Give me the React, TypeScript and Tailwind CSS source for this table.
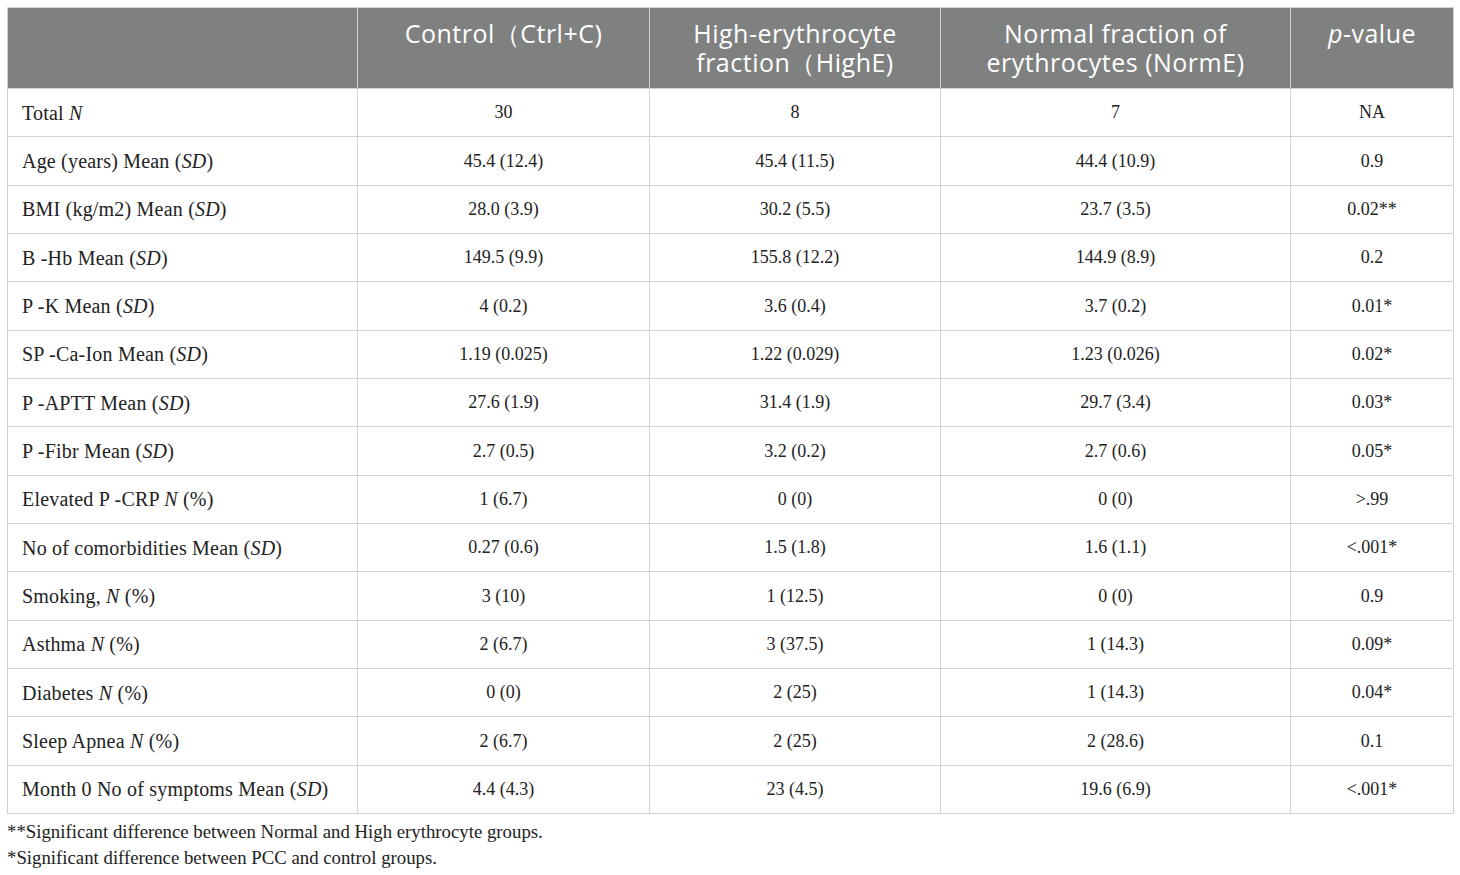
const rows: [React.ReactNode, string, string, string, string][] = [
  [<>Total <i>N</i></>, "30", "8", "7", "NA"],
  [<>Age (years) Mean (<i>SD</i>)</>, "45.4 (12.4)", "45.4 (11.5)", "44.4 (10.9)", "0.9"],
  [<>BMI (kg/m2) Mean (<i>SD</i>)</>, "28.0 (3.9)", "30.2 (5.5)", "23.7 (3.5)", "0.02**"],
  [<>B -Hb Mean (<i>SD</i>)</>, "149.5 (9.9)", "155.8 (12.2)", "144.9 (8.9)", "0.2"],
  [<>P -K Mean (<i>SD</i>)</>, "4 (0.2)", "3.6 (0.4)", "3.7 (0.2)", "0.01*"],
  [<>SP -Ca-Ion Mean (<i>SD</i>)</>, "1.19 (0.025)", "1.22 (0.029)", "1.23 (0.026)", "0.02*"],
  [<>P -APTT Mean (<i>SD</i>)</>, "27.6 (1.9)", "31.4 (1.9)", "29.7 (3.4)", "0.03*"],
  [<>P -Fibr Mean (<i>SD</i>)</>, "2.7 (0.5)", "3.2 (0.2)", "2.7 (0.6)", "0.05*"],
  [<>Elevated P -CRP <i>N</i> (%)</>, "1 (6.7)", "0 (0)", "0 (0)", ">.99"],
  [<>No of comorbidities Mean (<i>SD</i>)</>, "0.27 (0.6)", "1.5 (1.8)", "1.6 (1.1)", "<.001*"],
  [<>Smoking, <i>N</i> (%)</>, "3 (10)", "1 (12.5)", "0 (0)", "0.9"],
  [<>Asthma <i>N</i> (%)</>, "2 (6.7)", "3 (37.5)", "1 (14.3)", "0.09*"],
  [<>Diabetes <i>N</i> (%)</>, "0 (0)", "2 (25)", "1 (14.3)", "0.04*"],
  [<>Sleep Apnea <i>N</i> (%)</>, "2 (6.7)", "2 (25)", "2 (28.6)", "0.1"],
  [<>Month 0 No of symptoms Mean (<i>SD</i>)</>, "4.4 (4.3)", "23 (4.5)", "19.6 (6.9)", "<.001*"],
];

const head = "border border-[#d2d2d2] px-2 text-center font-normal align-middle";
const cell = "border border-[#d2d2d2] text-center align-middle text-[18px]";

export default function App() {
  return (
    <div className="min-h-screen bg-white pt-[7px] pl-[7px] text-[#222]">
      <table className="w-[1446px] table-fixed border-collapse">
        <colgroup>
          <col className="w-[350px]" />
          <col className="w-[292px]" />
          <col className="w-[291px]" />
          <col className="w-[350px]" />
          <col className="w-[163px]" />
        </colgroup>
        <thead>
          <tr className="h-[81px] bg-[#7f8180] text-white text-[25px] leading-[29px] tracking-[0.5px] font-['Open_Sans',sans-serif]">
            <th className={head}></th>
            <th className={`${head} pb-[29px]`}>Control（Ctrl+C)</th>
            <th className={head}>High-erythrocyte fraction（HighE)</th>
            <th className={head}>Normal fraction of erythrocytes (NormE)</th>
            <th className={`${head} pb-[29px]`}><i>p</i>-value</th>
          </tr>
        </thead>
        <tbody className="font-['Liberation_Serif',serif]">
          {rows.map((r, i) => (
            <tr key={i} className="h-[48.35px]">
              <td className="border border-[#d2d2d2] pl-[14px] align-middle text-[20px] tracking-[0.2px]">{r[0]}</td>
              <td className={cell}>{r[1]}</td>
              <td className={cell}>{r[2]}</td>
              <td className={cell}>{r[3]}</td>
              <td className={cell}>{r[4]}</td>
            </tr>
          ))}
        </tbody>
      </table>
      <div className="mt-[5px] font-['Liberation_Serif',serif] text-[18.8px] leading-[26px]">
        <p>**Significant difference between Normal and High erythrocyte groups.</p>
        <p>*Significant difference between PCC and control groups.</p>
      </div>
    </div>
  );
}
